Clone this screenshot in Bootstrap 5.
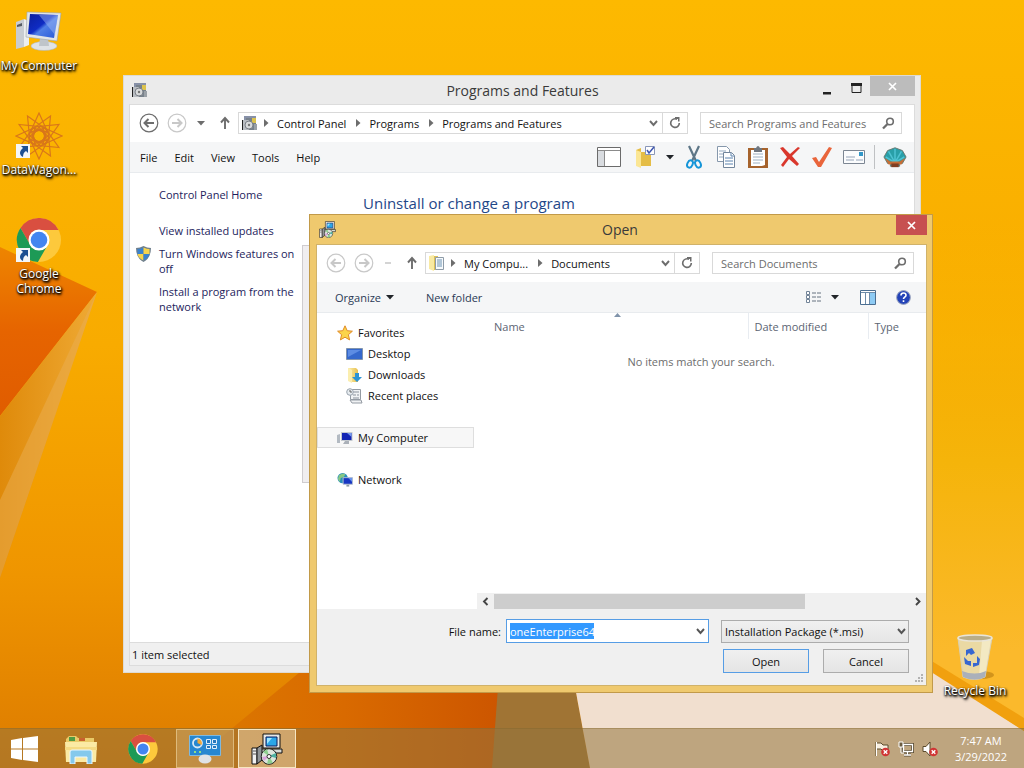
<!DOCTYPE html>
<html lang="en">
<head>
<meta charset="utf-8">
<meta name="viewport" content="width=device-width, initial-scale=1">
<title>Desktop</title>
<link rel="stylesheet" href="https://cdn.jsdelivr.net/npm/bootstrap@5.3.0/dist/css/bootstrap.min.css">
<style>
  body { font: 11px/15px "Open Sans", "Noto Sans", sans-serif; color: #111; background: #f3a000; }
  svg { display: block; flex-shrink: 0; }
  button, input, select { font: inherit; color: inherit; }
  .plain { border: 0; background: none; padding: 0; display: flex; align-items: center; justify-content: center; }
  .wallpaper { inset: 0; z-index: -1; }

  /* desktop shortcuts */
  .shortcut { width: 78px; min-height: 104px; padding-top: 8px; font-size: 12px; color: #fff; text-decoration: none; text-align: center; text-shadow: 1px 1px 2px #000, 0 1px 2px #000, 1px 2px 3px #000; }
  .shortcut svg { margin: 0 auto 2px; }
  .shortcut-bin { right: 10px; bottom: 30px; min-height: 0; padding: 0; }

  /* windows */
  .win-back { inset: 75px 103px 55px 123px; background: #ebebeb; border: 1px solid #dedbd3; padding: 0 5px 6px; }
  .win-open { inset: 214px 91px 35px 309px; background: #efc96e; border: 1px solid #c29a49; padding: 0 5px 6px 6px; }
  .titlebar { height: 28px; font-size: 14px; color: #3a3a3a; }
  .win-open .titlebar { height: 29px; }
  .titlebar svg { margin-left: 3px; }
  .titlebar .caption { flex: 1; text-align: center; padding-left: 8px; }
  .win-back .caption { padding-left: 82px; }
  .win-back .app { background: #fff; border: 1px solid #dcdcdc; }
  .win-open .app { background: #fff; border: 1px solid #d0b26a; }
  .close-btn { height: 20px; align-self: flex-start; color: #fff; }
  .win-back .close-btn { width: 45px; background: #bcbcbc; }
  .win-open .close-btn { width: 31px; background: #c75050; }

  .nav-row { height: 37px; padding: 0 12px 1px 9px; color: #6d6d6d; }
  .nav-btns { width: 99px; }
  .round { width: 20px; height: 20px; }
  .faint { color: #c8c8c8; }
  .address, .search { height: 22px; border: 1px solid #d9d9d9; background: #fff; }
  .address a { color: #111; text-decoration: none; white-space: nowrap; margin: 0 10px 0 8px; }
  .address .place { margin: 0 6px 0 3px; }
  .address .refresh { width: 25px; height: 20px; border-left: 1px solid #d9d9d9; }
  .search { width: 202px; margin-left: 12px; padding: 0 6px 0 8px; }
  .search input { border: 0; outline: 0; min-width: 0; flex: 1; padding: 0; background: none; }
  .search input::placeholder { color: #6d6d6d; opacity: 1; }
  .strip { height: 31px; background: #f5f6f7; border-bottom: 1px solid #e8ebee; }
  .menus { gap: 17px; padding-left: 10px; }
  .tool-set { gap: 8px; padding-right: 7px; }

  .tasks { width: 172px; padding: 14px 0 0 29px; position: relative; }
  .tasks a { display: block; width: 143px; color: #1d1d5c; text-decoration: none; margin-bottom: 8px; }
  .tasks .home { margin-bottom: 21px; }
  .shielded { position: relative; }
  .shielded svg { position: absolute; left: -23px; top: 0; }
  .task-scroll { right: -12px; top: 72px; width: 12px; height: 238px; background: #f0eef0; border: 1px solid #cfcccf; }
  .heading { font-size: 15px; line-height: 20px; color: #1f4788; font-weight: 400; margin: 0; padding: 20px 0 0 61px; }
  .status { height: 23px; border-top: 1px solid #dcdcdc; background: #f0f0f0; padding-left: 2px; }

  .commands { color: #2a3a55; padding: 0 15px 0 18px; }
  .commands .spaced { margin-left: 31px; }
  .tree { width: 157px; padding-top: 9px; flex-shrink: 0; }
  .tree a { display: flex; align-items: center; gap: 5px; height: 21px; color: #111; text-decoration: none; white-space: nowrap; padding-left: 19px; border: 1px solid transparent; }
  .tree .sub { padding-left: 28px; }
  .tree .gap { margin-top: 21px; }
  .tree .picked { background: #f7f7f7; border-color: #dedede; }
  .listing { padding-left: 3px; }
  .file-area { padding-left: 7px; }
  .files { color: #5c6573; table-layout: fixed; width: 100%; }
  .files th { font-weight: 400; height: 26px; padding: 0 0 0 6px; border-right: 1px solid #e8ecf1; position: relative; }
  .files th:first-child { padding-left: 10px; }
  .files th:last-child { border: 0; }
  .files td { color: #6d6d6d; text-align: center; padding: 15px 8px 0 0; }
  .sort { position: absolute; left: 130px; top: 0; }
  .hscroll { height: 16px; background: #f0f0f0; }
  .hscroll .thumb { width: 75%; height: 15px; background: #cdcdcd; }
  .footer-pane { background: #f0f0f0; padding: 10px 17px 12px 0; position: relative; }
  .combo { height: 24px; width: 203px; border: 1px solid #569de5; background: #fff; padding: 0 3px; margin: 0 12px 0 5px; }
  .combo input { width: 84px; height: 16px; border: 0; padding: 0; background: #3399ff; color: #fff; outline: 0; }
  .combo button, .type-wrap svg { color: #555; }
  .type-pick { width: 188px; height: 23px; border: 1px solid #acacac; border-radius: 0; padding: 0 3px; background: linear-gradient(#f0f0f0, #e6e6e6); appearance: none; }
  .type-wrap svg { position: absolute; right: 3px; top: 8px; pointer-events: none; }
  .pushes { gap: 14px; margin-top: 6px; }
  .push { width: 86px; height: 24px; border: 1px solid #acacac; background: linear-gradient(#f0f0f0, #e5e5e5); padding: 0; }
  .push.primary { border-color: #569de5; }
  .grip { position: absolute; right: 2px; bottom: 1px; }

  /* taskbar */
  .taskbar { height: 40px; background: rgba(147,116,62,.55); border-top: 1px solid rgba(130,100,40,.35); gap: 4px; z-index: 3; }
  .taskbar .start { width: 48px; }
  .task { width: 58px; height: 39px; }
  .task.running { background: rgba(225,200,150,.3); border: 1px solid rgba(240,215,160,.6); }
  .task.current { background: rgba(235,215,180,.5); border: 1px solid #f6e6c2; }
  .tray { gap: 8px; padding-right: 17px; color: #fff; }
  .clock { text-align: center; line-height: 16px; margin-left: 9px; }
</style>
</head>
<body>
<svg width="0" height="0" class="position-absolute" aria-hidden="true">
  <defs>
    <linearGradient id="screen" x1="0" y1="0" x2="1" y2="1"><stop offset="0" stop-color="#0b1f9c"/><stop offset=".45" stop-color="#0f2cc4"/><stop offset=".55" stop-color="#4f7fe6"/><stop offset="1" stop-color="#2858d8"/></linearGradient>
    <linearGradient id="fold" x1="0" y1="0" x2="1" y2="0"><stop offset="0" stop-color="#fbeeb0"/><stop offset="1" stop-color="#e8c04d"/></linearGradient>
  </defs>
  <symbol id="chrome" viewBox="0 0 48 48">
    <circle cx="24" cy="24" r="22" fill="#fdc93c"/>
    <path d="M24 14H43.6A22 22 0 0 0 5.5 12L15.3 29A10 10 0 0 1 24 14Z" fill="#d94f40"/>
    <path d="M5.5 12L15.3 29A10 10 0 0 0 32.7 29L22.9 46A22 22 0 0 1 5.5 12Z" fill="#1d9a56"/>
    <circle cx="24" cy="24" r="10.5" fill="#fff"/><circle cx="24" cy="24" r="8.3" fill="#4385f0"/>
  </symbol>
  <symbol id="link-arrow" viewBox="0 0 14 14"><path d="M0 0h14v14H0z" fill="#f4f6f8"/><path d="M5 2h7v7l-2-2c-2 1-3 3-3 6-4-2-4-6 0-9z" fill="#1d4f91"/></symbol>
  <symbol id="left" viewBox="0 0 20 20"><circle cx="10" cy="10" r="8.8" fill="none" stroke="currentColor" stroke-width="1.2"/><path d="M15 10H6M9.500 6L5.500 10l4 4" fill="none" stroke="currentColor" stroke-width="2"/></symbol>
  <symbol id="right" viewBox="0 0 20 20"><circle cx="10" cy="10" r="8.8" fill="none" stroke="currentColor" stroke-width="1.2"/><path d="M5 10h9M10.500 6l4 4-4 4" fill="none" stroke="currentColor" stroke-width="2"/></symbol>
  <symbol id="up" viewBox="0 0 12 14"><path d="M6 13V3M2 6.500L6 2l4 4.500" fill="none" stroke="currentColor" stroke-width="1.900"/></symbol>
  <symbol id="caret" viewBox="0 0 8 5"><path d="M0 0h8L4 4.500z" fill="currentColor"/></symbol>
  <symbol id="crumb" viewBox="0 0 5 8"><path d="M0 0l4.500 4L0 8z" fill="currentColor"/></symbol>
  <symbol id="chev" viewBox="0 0 9 7"><path d="M1 1l3.500 4L8 1" fill="none" stroke="currentColor" stroke-width="1.900"/></symbol>
  <symbol id="reload" viewBox="0 0 12 12"><path d="M8 2.300A4.300 4.300 0 1 0 10.300 6" fill="none" stroke="currentColor" stroke-width="1.600"/><path d="M6 0h4.500v4.500H9V2H6z" fill="currentColor"/></symbol>
  <symbol id="lens" viewBox="0 0 13 13"><circle cx="8" cy="4.500" r="3.300" fill="none" stroke="currentColor" stroke-width="1.600"/><path d="M5.500 7L1 11.500" stroke="currentColor" stroke-width="2.300"/></symbol>
  <symbol id="box-disc" viewBox="0 0 16 16"><path d="M2 1h12v4H2z" fill="#8791a8"/><path d="M4 3h10v12H4z" fill="#77818b"/><path d="M10 3h4v5h-4z" fill="#dcc34e"/><path d="M1 5h6v10H1z" fill="#b9bdc2"/><path d="M.5 5v10" stroke="#222"/><circle cx="7" cy="10" r="4" fill="#d8dadb" stroke="#7b8088"/><circle cx="7" cy="10" r="1.200" fill="#777"/><path d="M12 9h3v6h-3z" fill="#9ba1a7"/></symbol>
  <symbol id="installer" viewBox="0 0 32 32">
    <path d="M12 1h17v14H12z" fill="#e6e8e6" stroke="#111"/><path d="M15 4h11v9H15z" fill="#2aa6e8" stroke="#0c1c60"/><path d="M16 5h5l-5 6z" fill="#9fe5ff"/><path d="M9 16h22v4H9z" fill="#d7dad5" stroke="#111"/>
    <path d="M1 15h5v16H1z" fill="#f1f1f1" stroke="#111"/><path d="M6 15l5-3v15l-5 4z" fill="#919598" stroke="#111"/><path d="M2 18h3M2 21h3" stroke="#555"/>
    <circle cx="18" cy="23.500" r="7.800" fill="#dce5dc" stroke="#222"/><path d="M18 23l-6-4 4-3zM18 23l4 7-6 1z" fill="#8ccf8e"/><path d="M18 23l7-3v5z" fill="#4cb0a0"/><path d="M18 23l-7 1 2 4z" fill="#d9a1db"/><circle cx="18" cy="23.500" r="2" fill="#fff" stroke="#333"/>
  </symbol>
  <symbol id="pc" viewBox="0 0 48 48">
    <path d="M1 14l8-3v28l-8 2z" fill="#c8ccd1"/><path d="M9 11l5 2v24l-5 2z" fill="#eceeef"/><path d="M2 17l5-2v3l-5 1z" fill="#555b63"/>
    <ellipse cx="29" cy="38" rx="13" ry="4.500" fill="#dfe3e6" stroke="#a9b0b6" stroke-width=".5"/><path d="M25 30h8l1 8h-10z" fill="#bfc5ca"/>
    <path d="M12 4l34 1-4 28-31-4z" fill="#e2e5e8" stroke="#9ba2a9" stroke-width=".6"/><path d="M15 6l28 1-4 23-26-4z" fill="url(#screen)"/><path d="M24 7l19 0-3 20z" fill="#a5bdf6" opacity=".45"/>
  </symbol>
</svg>

<div class="d-flex flex-column vh-100 position-relative overflow-hidden">
  <svg class="wallpaper position-absolute w-100 h-100" viewBox="0 0 1024 768" preserveAspectRatio="none" aria-hidden="true">
    <defs>
      <linearGradient id="sky" x1="0" y1="0" x2="0" y2="1"><stop offset="0" stop-color="#fdb900"/><stop offset=".45" stop-color="#f8ab00"/><stop offset=".75" stop-color="#ef9500"/><stop offset="1" stop-color="#dd7b00"/></linearGradient>
      <linearGradient id="east" x1="0" y1="0" x2="0" y2="1"><stop offset=".28" stop-color="#fbb900" stop-opacity="0"/><stop offset=".6" stop-color="#f5b40a"/><stop offset=".85" stop-color="#fbb92c"/></linearGradient>
      <linearGradient id="ember" x1="0" y1="0" x2="0" y2="1"><stop offset="0" stop-color="#ee8500"/><stop offset=".5" stop-color="#e66400"/><stop offset="1" stop-color="#e05c00"/></linearGradient>
      <linearGradient id="sand" x1="0" y1="0" x2="1" y2="0"><stop offset="0" stop-color="#df8a0a"/><stop offset="1" stop-color="#efaa35"/></linearGradient>
      <linearGradient id="rust" x1="0" y1="0" x2="1" y2="0"><stop offset="0" stop-color="#dc7a00"/><stop offset=".5" stop-color="#d96a00"/><stop offset="1" stop-color="#cc5500"/></linearGradient>
    </defs>
    <path d="M0 0h1024v768H0z" fill="url(#sky)"/>
    <path d="M860 0h164v768H860z" fill="url(#east)"/>
    <path d="M0 247L97 292 0 416z" fill="url(#ember)"/>
    <path d="M97 292L0 416V578z" fill="url(#sand)"/>
    <path d="M97 292L0 500V578z" fill="#eaae52" opacity=".5"/>
    <path d="M184 768L300 672H505V768z" fill="url(#rust)"/>
    <path d="M500 660H570L590 768H492z" fill="#a07434"/>
    <path d="M570 660H917L1024 731V768H590z" fill="#f1dfcf"/>
    <path d="M917 652L1024 718V731L917 663z" fill="#f1a00e"/>
  </svg>

  <main class="flex-grow-1 position-relative">
    <nav class="d-inline-flex flex-column" aria-label="Desktop shortcuts">
      <a class="shortcut" href="#"><svg width="48" height="48"><use href="#pc"/></svg>My Computer</a>
      <a class="shortcut" href="#"><svg width="48" height="48" viewBox="0 0 48 48">
        <g fill="none" stroke="#d9771a" stroke-width="1.200"><path id="kite" d="M24 1L34 23 24 31 14 23z"/><use href="#kite" transform="rotate(30 24 24)"/><use href="#kite" transform="rotate(60 24 24)"/><use href="#kite" transform="rotate(90 24 24)"/><use href="#kite" transform="rotate(120 24 24)"/><use href="#kite" transform="rotate(150 24 24)"/><use href="#kite" transform="rotate(180 24 24)"/><use href="#kite" transform="rotate(210 24 24)"/><use href="#kite" transform="rotate(240 24 24)"/><use href="#kite" transform="rotate(270 24 24)"/><use href="#kite" transform="rotate(300 24 24)"/><use href="#kite" transform="rotate(330 24 24)"/></g>
        <use href="#link-arrow" x="1" y="32" width="14" height="14"/></svg>DataWagon...</a>
      <a class="shortcut" href="#"><svg width="48" height="48" viewBox="0 0 48 48"><use href="#chrome" width="48" height="48"/><use href="#link-arrow" x="1" y="32" width="14" height="14"/></svg>Google<br>Chrome</a>
    </nav>
    <a class="shortcut shortcut-bin position-absolute" href="#"><svg width="48" height="48" viewBox="0 0 48 48">
      <ellipse cx="30" cy="42" rx="13" ry="4" fill="#b87c10" opacity=".6"/>
      <path d="M7 5L12 44Q24 49 34 44L41 5Z" fill="#ead9a3" stroke="#d9cfb4"/><path d="M31 7h9l-6 36h-6z" fill="#f5ecca" opacity=".8"/><path d="M11 38L12 44Q24 49 34 44L35 38Q24 43 11 38Z" fill="#aab0ba"/>
      <ellipse cx="24" cy="5" rx="17" ry="3" fill="#b9ad87" stroke="#e9e5da" stroke-width="1.500"/>
      <path d="M15 17l6-2 3 5-4 2-2-2-3 3zM13 24l4 4 3 0v5l-6-2zM26 23l3 3-1 6-6 2v-4h4z" fill="#3767d0"/></svg>Recycle Bin</a>

    <section class="win-back position-absolute d-flex flex-column" aria-label="Programs and Features">
      <header class="titlebar d-flex align-items-center">
        <svg width="16" height="16"><use href="#box-disc"/></svg>
        <span class="caption">Programs and Features</span>
        <button class="plain h-100 px-2" aria-label="Minimize"><svg class="m-0" width="9" height="12"><path d="M0 8h8v2.500H0z" fill="#222"/></svg></button>
        <button class="plain h-100 px-2" aria-label="Maximize"><svg width="11" height="14"><path d="M1 1.500h9v8H1z" fill="none" stroke="#222"/><path d="M0 0h11v3H0z" fill="#222"/></svg></button>
        <button class="plain close-btn" aria-label="Close"><svg class="m-0" width="9" height="9"><path d="M1 1l7 7M8 1L1 8" stroke="#fff" stroke-width="1.700"/></svg></button>
      </header>
      <div class="app flex-grow-1 d-flex flex-column">
        <div class="nav-row d-flex align-items-center">
          <div class="nav-btns d-flex align-items-center">
            <button class="plain round" aria-label="Back"><svg width="20" height="20"><use href="#left"/></svg></button>
            <button class="plain round faint ms-2" aria-label="Forward"><svg width="20" height="20"><use href="#right"/></svg></button>
            <button class="plain round ms-1" aria-label="Recent"><svg width="8" height="5"><use href="#caret"/></svg></button>
            <button class="plain round ms-1" aria-label="Up"><svg width="12" height="14"><use href="#up"/></svg></button>
          </div>
          <div class="address d-flex align-items-center flex-grow-1">
            <svg class="place" width="16" height="16"><use href="#box-disc"/></svg>
            <svg width="5" height="8"><use href="#crumb"/></svg><a href="#">Control Panel</a>
            <svg width="5" height="8"><use href="#crumb"/></svg><a href="#">Programs</a>
            <svg width="5" height="8"><use href="#crumb"/></svg><a href="#">Programs and Features</a>
            <button class="plain ms-auto me-1" aria-label="History"><svg width="9" height="7"><use href="#chev"/></svg></button>
            <button class="plain refresh" aria-label="Refresh"><svg width="12" height="12"><use href="#reload"/></svg></button>
          </div>
          <label class="search d-flex align-items-center"><input type="text" aria-label="Search" placeholder="Search Programs and Features"><svg width="13" height="13"><use href="#lens"/></svg></label>
        </div>
        <div class="strip d-flex align-items-center">
          <div class="menus d-flex">
            <button class="plain">File</button><button class="plain">Edit</button><button class="plain">View</button><button class="plain">Tools</button><button class="plain">Help</button>
          </div>
          <div class="tool-set ms-auto d-flex align-items-center">
            <button class="plain me-1" aria-label="Pane"><svg width="26" height="24" viewBox="0 0 26 24"><path d="M1.500 2.500h23v19h-23z" fill="#fff" stroke="#6b6b6b"/><path d="M2 6h6v15H2z" fill="#d9dce0"/><path d="M2 5.500h22M8.500 6v15" stroke="#8b8b8b"/></svg></button>
            <button class="plain" aria-label="Organize"><svg width="24" height="24" viewBox="0 0 24 24"><path d="M2 5l5-2v4h10v14H4z" fill="#e5bd46"/><path d="M2 5l5 2v16l-5-2z" fill="#fbe694"/><path d="M11.500 1.500h9v8h-9z" fill="#fff" stroke="#8996b8"/><path d="M13 5l2 3 5-6" fill="none" stroke="#3d55b0" stroke-width="1.500"/></svg><svg class="ms-2 text-dark" width="8" height="5"><use href="#caret"/></svg></button>
            <button class="plain" aria-label="Cut"><svg width="24" height="24" viewBox="0 0 24 24"><path d="M7 1l7 15M17 1l-7 15" stroke="#5d7687" stroke-width="2.200"/><ellipse cx="8" cy="19" rx="2.600" ry="3.800" transform="rotate(25 8 19)" fill="none" stroke="#1595d8" stroke-width="2"/><ellipse cx="16" cy="19" rx="2.600" ry="3.800" transform="rotate(-25 16 19)" fill="none" stroke="#1595d8" stroke-width="2"/></svg></button>
            <button class="plain" aria-label="Copy"><svg width="24" height="24" viewBox="0 0 24 24"><path d="M3.500 1.500h9l3 3v12h-12z" fill="#fff" stroke="#8698ac"/><path d="M5 6h7M5 9h7M5 12h4" stroke="#93a8bf"/><path d="M9.500 7.500h8l3 3v12h-11z" fill="#fff" stroke="#73869c"/><path d="M17 8v3h3M11 13h8M11 16h8M11 19h8" fill="none" stroke="#5a82ae"/></svg></button>
            <button class="plain" aria-label="Paste"><svg width="24" height="24" viewBox="0 0 24 24"><path d="M2 3h20v20H2z" fill="#a6632d"/><path d="M5 5h14v15l-3 1H5z" fill="#fff"/><path d="M7 9h10M7 12h10M7 15h10M7 18h7" stroke="#9db0c2"/><path d="M8 3h2q2-4 4 0h2v4H8z" fill="#6f7780"/></svg></button>
            <button class="plain" aria-label="Delete"><svg width="24" height="24" viewBox="0 0 24 24"><path d="M2 3l3-1 7 7 8-7 2 1-8 8 7 8-2 2-8-7-6 8-2-2 6-8z" fill="#d9372c"/></svg></button>
            <button class="plain" aria-label="Properties"><svg width="24" height="24" viewBox="0 0 24 24"><path d="M2 13l4-1 3 5L19 2l3 1L11 22H8z" fill="#e9653b"/></svg></button>
            <button class="plain" aria-label="E-mail"><svg width="24" height="24" viewBox="0 0 24 24"><path d="M1.500 5.500h21v13h-21z" fill="#fbfcfd" stroke="#7c8693"/><path d="M17 7h4v4h-4z" fill="#3297c8"/><path d="M4 12h9M4 15h8M14 15h7" stroke="#96a4b8"/></svg></button>
            <span class="vr bg-dark"></span>
            <button class="plain" aria-label="Shell"><svg width="24" height="24" viewBox="0 0 26 24"><path d="M13 2L5 5 1 12l4 7h3v3h10v-3h3l4-7-4-7z" fill="#299fa8" stroke="#69776f"/><path d="M13 18V3M13 18L6 6M13 18L20 6M13 18L3 12M13 18l10-6" stroke="#4fc3d2" stroke-width="1.600"/><path d="M2 13l4 7h14l4-7-6 4H8z" fill="#c66e36"/><path d="M9 19h8v4H9z" fill="#813f22"/></svg></button>
          </div>
        </div>
        <div class="flex-grow-1 d-flex">
          <nav class="tasks" aria-label="Tasks">
            <a class="home" href="#">Control Panel Home</a>
            <a href="#">View installed updates</a>
            <a class="shielded" href="#"><svg width="15" height="16" viewBox="0 0 15 16"><path d="M7.500 0Q11 2 15 2 15 12 7.500 16 0 12 0 2 4 2 7.500 0Z" fill="#6f7f8d"/><path d="M7.500 1.500Q4 3 1.500 3V8h6z" fill="#3a82cd"/><path d="M7.500 1.500Q11 3 13.500 3V8h-6z" fill="#f6d44c"/><path d="M1.500 8Q2.500 12 7.500 14.500V8z" fill="#f6d44c"/><path d="M13.500 8Q12.500 12 7.500 14.500V8z" fill="#3a82cd"/></svg>Turn Windows features on off</a>
            <a href="#">Install a program from the network</a>
            <div class="task-scroll position-absolute"></div>
          </nav>
          <h1 class="heading">Uninstall or change a program</h1>
        </div>
        <div class="status d-flex align-items-center">1 item selected</div>
      </div>
    </section>

    <section class="win-open position-absolute d-flex flex-column" role="dialog" aria-label="Open">
      <header class="titlebar d-flex align-items-center">
        <svg width="17" height="17"><use href="#installer"/></svg>
        <span class="caption">Open</span>
        <button class="plain close-btn" aria-label="Close dialog"><svg class="m-0" width="9" height="9"><path d="M1 1l7 7M8 1L1 8" stroke="#fff" stroke-width="1.700"/></svg></button>
      </header>
      <div class="app flex-grow-1 d-flex flex-column">
        <div class="nav-row d-flex align-items-center">
          <div class="nav-btns d-flex align-items-center">
            <button class="plain round faint" aria-label="Back"><svg width="20" height="20"><use href="#left"/></svg></button>
            <button class="plain round faint ms-2" aria-label="Forward"><svg width="20" height="20"><use href="#right"/></svg></button>
            <button class="plain round ms-1" aria-label="Recent"><svg width="6" height="2"><path d="M0 0h6v2H0z" fill="#d4d4d4"/></svg></button>
            <button class="plain round ms-1" aria-label="Up"><svg width="12" height="14"><use href="#up"/></svg></button>
          </div>
          <div class="address d-flex align-items-center flex-grow-1">
            <svg class="place" width="16" height="16" viewBox="0 0 16 16"><path d="M0 1l5-1v16l-5-2z" fill="#f9eaa2"/><path d="M5 1h4v14H5z" fill="#ddc158"/><path d="M6.500 2.500h8v12h-8z" fill="#f7fafc" stroke="#8e9ba7"/><path d="M8 5h5M8 7h5M8 9h5M8 11h5" stroke="#6d93b3"/></svg>
            <svg width="5" height="8"><use href="#crumb"/></svg><a href="#">My Compu...</a>
            <svg width="5" height="8"><use href="#crumb"/></svg><a href="#">Documents</a>
            <button class="plain ms-auto me-1" aria-label="History"><svg width="9" height="7"><use href="#chev"/></svg></button>
            <button class="plain refresh" aria-label="Refresh"><svg width="12" height="12"><use href="#reload"/></svg></button>
          </div>
          <label class="search d-flex align-items-center"><input type="text" aria-label="Search" placeholder="Search Documents"><svg width="13" height="13"><use href="#lens"/></svg></label>
        </div>
        <div class="strip commands d-flex align-items-center">
          <button class="plain">Organize<svg class="ms-1 text-dark" width="10" height="5"><use href="#caret"/></svg></button>
          <button class="plain spaced">New folder</button>
          <button class="plain ms-auto" aria-label="View"><svg width="16" height="14" viewBox="0 0 16 14"><path d="M.5 1.500h3v3h-3zM.5 5.500h3v3h-3zM.5 9.500h3v3h-3z" fill="#fff" stroke="#718397"/><path d="M6 3h4M11 3h4M6 7h4M11 7h4M6 11h4M11 11h4" stroke="#667280"/></svg><svg class="ms-2 me-1 text-dark" width="10" height="5"><use href="#caret"/></svg></button>
          <button class="plain ms-3" aria-label="Preview pane"><svg width="16" height="15" viewBox="0 0 16 15"><path d="M.5.500h15v14H.5z" fill="#fff" stroke="#4b6e91"/><path d="M10 3h5v11h-5z" fill="#8ecbf4"/><path d="M1 2.500h14M5.500 3v11M9.500 3v11" stroke="#6d8ba8"/></svg></button>
          <button class="plain ms-3 ps-1" aria-label="Help"><svg width="15" height="15" viewBox="0 0 15 15"><circle cx="7.500" cy="7.500" r="6.900" fill="#2343b8" stroke="#9fa8be"/><path d="M5 5.500q0-2.500 2.500-2.500T10 5.200Q10 6.500 8.500 7.300 7.500 8 7.500 9M7.500 10.300v1.700" fill="none" stroke="#fff" stroke-width="1.600"/></svg></button>
        </div>
        <div class="flex-grow-1 d-flex">
          <nav class="tree" aria-label="Places">
            <a href="#"><svg width="16" height="16" viewBox="0 0 16 16"><path d="M8 .8l2.200 4.900 5.200.5-4 3.500 1.200 5.200L8 12.200l-4.600 2.700 1.200-5.200-4-3.500 5.200-.5z" fill="#fbd44b" stroke="#e08b26"/></svg>Favorites</a>
            <a class="sub" href="#"><svg width="17" height="14" viewBox="0 0 17 14"><path d="M.5 1.500h16v11H.5z" fill="#3568cc" stroke="#8194ad"/><path d="M2 3h13L2 10z" fill="#5d8ce3"/></svg>Desktop</a>
            <a class="sub" href="#"><svg width="17" height="16" viewBox="0 0 17 16"><path d="M2 1h8l2 2v12H4z" fill="url(#fold)"/><path d="M2 1l4 2v13l-4-2z" fill="#fbeeaf"/><path d="M9 6h4v4h3l-5 5-5-5h3z" fill="#2c94d5"/></svg>Downloads</a>
            <a class="sub" href="#"><svg width="17" height="16" viewBox="0 0 17 16"><path d="M4.500 1.500h10v10h-10zM4 12h11l1 3H6z" fill="#f0f2f4" stroke="#949ba3"/><path d="M7 4h6M7 7h3M11 7h2M7 10h6" stroke="#8b939d"/><circle cx="4" cy="4" r="3.300" fill="#e6ebef" stroke="#9aa4ae"/><path d="M4 2v2h2" fill="none" stroke="#666"/></svg>Recent places</a>
            <a class="gap picked" href="#"><svg width="16" height="14" viewBox="0 0 16 14"><path d="M0 4l3-1v9H0z" fill="#b3bac2"/><path d="M4 1h11.500v9H4z" fill="#c4c9cf"/><path d="M5 2h9.500v7H5z" fill="#1325b4"/><path d="M10 2h4.500v4z" fill="#7899ed"/><path d="M8 10h4v3H6z" fill="#aab0b8"/></svg>My Computer</a>
            <a class="gap" href="#"><svg width="16" height="16" viewBox="0 0 17 16"><circle cx="6" cy="6" r="5.500" fill="#288ebc"/><path d="M2 3l4-2 3 1-2 3-3 1-1 4-2-3z" fill="#86c884"/><path d="M6.500 5.500h10v7h-10z" fill="#1836c3" stroke="#b4c0cf"/><path d="M12 6h4v4z" fill="#6691ed"/><path d="M10 13h3v2h-3z" fill="#909aa6"/></svg>Network</a>
          </nav>
          <div class="listing flex-grow-1 d-flex flex-column">
            <div class="file-area">
              <table class="files">
                <colgroup><col><col width="120"><col width="58"></colgroup>
                <thead><tr><th>Name<svg class="sort" width="7" height="4"><path d="M0 4L3.500 0 7 4z" fill="#8093aa"/></svg></th><th>Date modified</th><th>Type</th></tr></thead>
                <tbody><tr><td colspan="3">No items match your search.</td></tr></tbody>
              </table>
            </div>
            <div class="hscroll d-flex align-items-center mt-auto">
              <button class="plain px-1" aria-label="Scroll left"><svg width="9" height="9"><path d="M6.500 1L3 4.500 6.500 8" fill="none" stroke="#444" stroke-width="1.900"/></svg></button>
              <div class="flex-grow-1"><div class="thumb"></div></div>
              <button class="plain px-1" aria-label="Scroll right"><svg width="9" height="9"><path d="M3 1l3.500 3.500L3 8" fill="none" stroke="#444" stroke-width="1.900"/></svg></button>
            </div>
          </div>
        </div>
        <div class="footer-pane">
          <div class="d-flex justify-content-end align-items-center">
            <label for="fname">File name:</label>
            <div class="combo d-flex align-items-center"><input id="fname" type="text" value="oneEnterprise64"><button class="plain ms-auto" aria-label="Previous names"><svg width="9" height="7"><use href="#chev"/></svg></button></div>
            <div class="type-wrap position-relative"><select class="type-pick" aria-label="File type"><option>Installation Package (*.msi)</option></select><svg width="9" height="7"><use href="#chev"/></svg></div>
          </div>
          <div class="pushes d-flex justify-content-end">
            <button class="push primary">Open</button><button class="push">Cancel</button>
          </div>
          <svg class="grip" width="10" height="10" fill="#b3b3b3"><path d="M7 0h2v2H7zM4 3h2v2H4zM7 3h2v2H7zM1 6h2v2H1zM4 6h2v2H4zM7 6h2v2H7z"/></svg>
        </div>
      </div>
    </section>
  </main>

  <footer class="taskbar d-flex align-items-center">
    <button class="plain start" aria-label="Start"><svg width="27" height="26" viewBox="0 0 27 26"><path d="M0 4l11-2v10.500H0zM12 2L27 0v12.500H12zM0 13.500h11V24L0 22zM12 13.500h15V26l-15-2z" fill="#fff"/></svg></button>
    <button class="plain task" aria-label="File Explorer"><svg width="32" height="30" viewBox="0 0 32 30"><path d="M1 5l3-3h7l2 2h16v24H1z" fill="#e9ca68"/><path d="M4 3h6v4H4z" fill="#4f9b44"/><path d="M14 4h6v3h-6z" fill="#c9612f"/><path d="M0 8h32l-1 20H1z" fill="#fbeaa4"/><path d="M0 13h32v3H0z" fill="#f5db84"/><path d="M5 18q0-2 2-2h18q2 0 2 2v12h-5v-7H10v7H5z" fill="#85c9ec" stroke="#eaf7ff"/></svg></button>
    <button class="plain task" aria-label="Google Chrome"><svg width="32" height="32"><use href="#chrome"/></svg></button>
    <button class="plain task running" aria-label="Control Panel"><svg width="32" height="30" viewBox="0 0 32 30"><path d="M0.500 1.500h31v20H.5z" fill="#2787d0" stroke="#7eb9df"/><circle cx="8.500" cy="9" r="4.500" fill="none" stroke="#d9e9f5" stroke-width="1.800"/><path d="M8.500 4.500a4.500 4.500 0 0 1 4 6.500L8.500 9z" fill="#f1a83a"/><path d="M17.500 5.500h4v4h-4zM23.500 5.500h4v4h-4zM17.500 11.500h4v3h-4zM23.500 11.500h4v3h-4z" fill="#2a79bc" stroke="#e1f1fc"/><path d="M5 17h2v2H5zM10 17h2v2h-2z" fill="#8fdf86"/><ellipse cx="16" cy="25" rx="6.500" ry="4.500" fill="#dfe2e5"/></svg></button>
    <button class="plain task current" aria-label="Windows Installer"><svg width="32" height="32"><use href="#installer"/></svg></button>
    <div class="tray d-flex align-items-center ms-auto">
      <svg width="16" height="16" viewBox="0 0 16 16"><path d="M2 1v14M3 2h4l2 2h5v6H9L7 8H3" fill="#f8efe0" stroke="#5b4a2c"/><path d="M2.500 1v14" stroke="#fff"/><circle cx="11.500" cy="11" r="4.300" fill="#d03434"/><path d="M9.700 9.200l3.600 3.600M13.300 9.200l-3.600 3.600" stroke="#fff" stroke-width="1.400"/></svg>
      <svg width="16" height="16" viewBox="0 0 16 16"><path d="M4.500 3.500h10v7h-10zM9.500 11v3M6 14h7" fill="none" stroke="#594a30" stroke-width="3"/><path d="M1 1h4v5H1zM3 6v6h3" fill="#6c5c40" stroke="#fff"/><path d="M5.500 3.500h9v7h-9zM9.500 11v3M6 14h7" fill="none" stroke="#fff" stroke-width="1.300"/></svg>
      <svg width="16" height="16" viewBox="0 0 16 16"><path d="M1 5.500h3L8 1v14l-4-4.500H1z" fill="#fff" stroke="#5b4a2c"/><circle cx="11.500" cy="11" r="4.300" fill="#d03434"/><path d="M9.700 9.200l3.600 3.600M13.300 9.200l-3.600 3.600" stroke="#fff" stroke-width="1.400"/></svg>
      <time class="clock">7:47 AM<br>3/29/2022</time>
    </div>
  </footer>
</div>
<script src="https://cdn.jsdelivr.net/npm/bootstrap@5.3.0/dist/js/bootstrap.bundle.min.js"></script>
</body>
</html>
